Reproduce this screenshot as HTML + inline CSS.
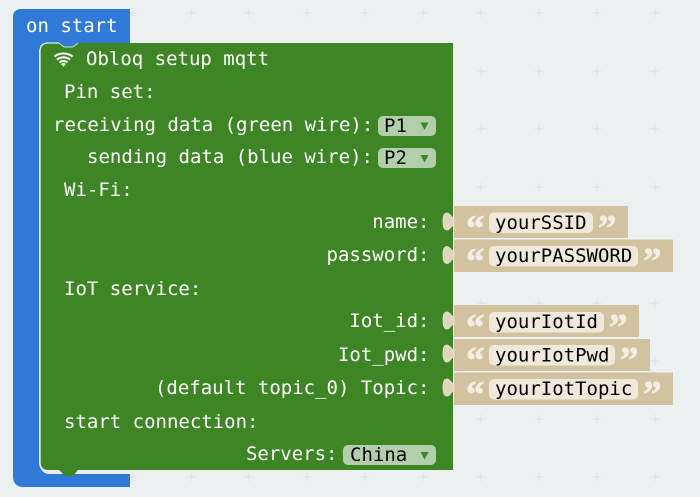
<!DOCTYPE html>
<html>
<head>
<meta charset="utf-8">
<style>
html,body{margin:0;padding:0;background:#ecf0f1;width:700px;height:497px;overflow:hidden}
svg{display:block}
text{font-family:"DejaVu Sans Mono","Liberation Mono",monospace;font-size:19px;fill:#fff}
.k{fill:#000}
.q{font-family:"Liberation Serif",serif;font-weight:bold;font-size:37px;fill:#f3eee3;stroke:#f3eee3;stroke-width:.7}
</style>
</head>
<body>
<svg width="700" height="497" viewBox="0 0 700 497" xmlns="http://www.w3.org/2000/svg">
<defs>
<path id="p" d="M-4.5 0H4.5M0 -4.5V4.5" stroke="#dbe0e1" stroke-width="1" fill="none"/>
<path id="tab" d="M12 5C9 5 8.5 0 5 0C2 0 1 3 1 8.5C1 14 2 17 5 17C8.5 17 9 12 12 12Z" fill="#e0d5bd" stroke="#ece5d5" stroke-width=".8"/>
</defs>
<g>
<use href="#p" x="133" y="13"/><use href="#p" x="191" y="13"/><use href="#p" x="133" y="477"/><use href="#p" x="191" y="477"/><use href="#p" x="249" y="477"/><use href="#p" x="307" y="477"/><use href="#p" x="365" y="477"/><use href="#p" x="423" y="477"/><use href="#p" x="481" y="477"/><use href="#p" x="539" y="477"/><use href="#p" x="597" y="477"/><use href="#p" x="655" y="477"/>
<use href="#p" x="249" y="13"/><use href="#p" x="307" y="13"/><use href="#p" x="365" y="13"/><use href="#p" x="423" y="13"/><use href="#p" x="481" y="13"/><use href="#p" x="539" y="13"/><use href="#p" x="597" y="13"/><use href="#p" x="655" y="13"/>
<use href="#p" x="481" y="71"/><use href="#p" x="539" y="71"/><use href="#p" x="597" y="71"/><use href="#p" x="655" y="71"/>
<use href="#p" x="481" y="129"/><use href="#p" x="539" y="129"/><use href="#p" x="597" y="129"/><use href="#p" x="655" y="129"/>
<use href="#p" x="481" y="187"/><use href="#p" x="539" y="187"/><use href="#p" x="597" y="187"/><use href="#p" x="655" y="187"/>
<use href="#p" x="655" y="303"/><use href="#p" x="481" y="303"/><use href="#p" x="539" y="303"/><use href="#p" x="597" y="303"/><use href="#p" x="655" y="361"/>
<use href="#p" x="481" y="419"/><use href="#p" x="539" y="419"/><use href="#p" x="597" y="419"/><use href="#p" x="655" y="419"/>
</g>

<!-- on start -->
<path d="M21 9H130V50H47C43 50 39 47 39 51V462C39 468 43 474 49 474H130V487H23C17 487 13 483 13 477V17C13 12 16 9 21 9Z" fill="#3179d6"/>
<text x="26" y="32">on start</text>

<!-- main block -->
<path d="M48 43H59L64 47H73L78 43H453V470H78L73 476H65L59 470H48C43 470 40 466 40 462V51C40 46 43 43 48 43Z" fill="#3e8525"/>
<path d="M59 43H48C43 43 40 46 40 51V462C40 468 43 471 48 472H59" fill="none" stroke="#e6efe1" stroke-width="1.3"/>
<path d="M59 43L64 47H73L78 43" fill="none" stroke="#cfe0c8" stroke-width="1"/>

<!-- wifi icon -->
<g fill="none" stroke="#fff" stroke-width="2">
<path d="M54.5 56.6C59 52.4 68 52.4 72.5 56.6"/>
<path d="M57 59.6C60.5 56.6 66.5 56.6 70 59.6"/>
<path d="M59.5 62.4C61.8 60.6 65.2 60.6 67.5 62.4"/>
</g>
<path d="M61 64C62.5 62.8 64.5 62.8 66 64L63.5 66.8Z" fill="#fff"/>

<text x="86" y="65">Obloq setup mqtt</text>
<text x="64" y="98">Pin set:</text>
<text x="53" y="131">receiving data (green wire):</text>
<text x="87" y="163">sending data (blue wire):</text>
<text x="64" y="196">Wi-Fi:</text>
<text x="429.5" y="228" text-anchor="end">name:</text>
<text x="429.5" y="261" text-anchor="end">password:</text>
<text x="64" y="295">IoT service:</text>
<text x="429.5" y="327" text-anchor="end">Iot_id:</text>
<text x="429.5" y="361" text-anchor="end">Iot_pwd:</text>
<text x="429.5" y="394" text-anchor="end">(default topic_0) Topic:</text>
<text x="64" y="428">start connection:</text>
<text x="337.5" y="460" text-anchor="end">Servers:</text>

<!-- dropdowns -->
<rect x="378" y="116" width="58" height="20" rx="5" fill="#b3ceaa"/>
<text class="k" x="384" y="132">P1</text>
<path d="M420.5 122.5H428.5L424.5 130Z" fill="#3e8525"/>
<rect x="378" y="148" width="58" height="20" rx="5" fill="#b3ceaa"/>
<text class="k" x="384" y="164">P2</text>
<path d="M420.5 155H428.5L424.5 162.5Z" fill="#3e8525"/>
<rect x="343" y="445" width="93" height="20" rx="5" fill="#b3ceaa"/>
<text class="k" x="350" y="461">China</text>
<path d="M420.5 452H428.5L424.5 459.5Z" fill="#3e8525"/>

<!-- strings -->
<rect x="454" y="206" width="174" height="32" fill="#d2c2a0"/>
<rect x="454" y="239.5" width="219" height="32.5" fill="#d2c2a0"/>
<rect x="454" y="305" width="185" height="32" fill="#d2c2a0"/>
<rect x="454" y="339" width="196" height="32" fill="#d2c2a0"/>
<rect x="454" y="372.5" width="219" height="32.5" fill="#d2c2a0"/>

<use href="#tab" x="442" y="213"/>
<use href="#tab" x="442" y="246.5"/>
<use href="#tab" x="442" y="312"/>
<use href="#tab" x="442" y="345"/>
<use href="#tab" x="442" y="379"/>

<rect x="489" y="212.5" width="104" height="20.5" rx="5" fill="#efe9dc"/>
<rect x="489" y="246" width="149" height="20.5" rx="5" fill="#efe9dc"/>
<rect x="489" y="312" width="115" height="20.5" rx="5" fill="#efe9dc"/>
<rect x="489" y="345" width="126" height="20.5" rx="5" fill="#efe9dc"/>
<rect x="489" y="379" width="149" height="20.5" rx="5" fill="#efe9dc"/>

<text class="k" x="495" y="229">yourSSID</text>
<text class="k" x="495" y="262">yourPASSWORD</text>
<text class="k" x="495" y="328">yourIotId</text>
<text class="k" x="495" y="361.5">yourIotPwd</text>
<text class="k" x="495" y="395">yourIotTopic</text>

<text class="q" x="466" y="240.5">“</text><text class="q" x="598" y="240.5">”</text>
<text class="q" x="466" y="273.5">“</text><text class="q" x="643" y="273.5">”</text>
<text class="q" x="466" y="339.5">“</text><text class="q" x="609" y="339.5">”</text>
<text class="q" x="466" y="372.5">“</text><text class="q" x="620" y="372.5">”</text>
<text class="q" x="466" y="406.5">“</text><text class="q" x="643" y="406.5">”</text>
</svg>
</body>
</html>
